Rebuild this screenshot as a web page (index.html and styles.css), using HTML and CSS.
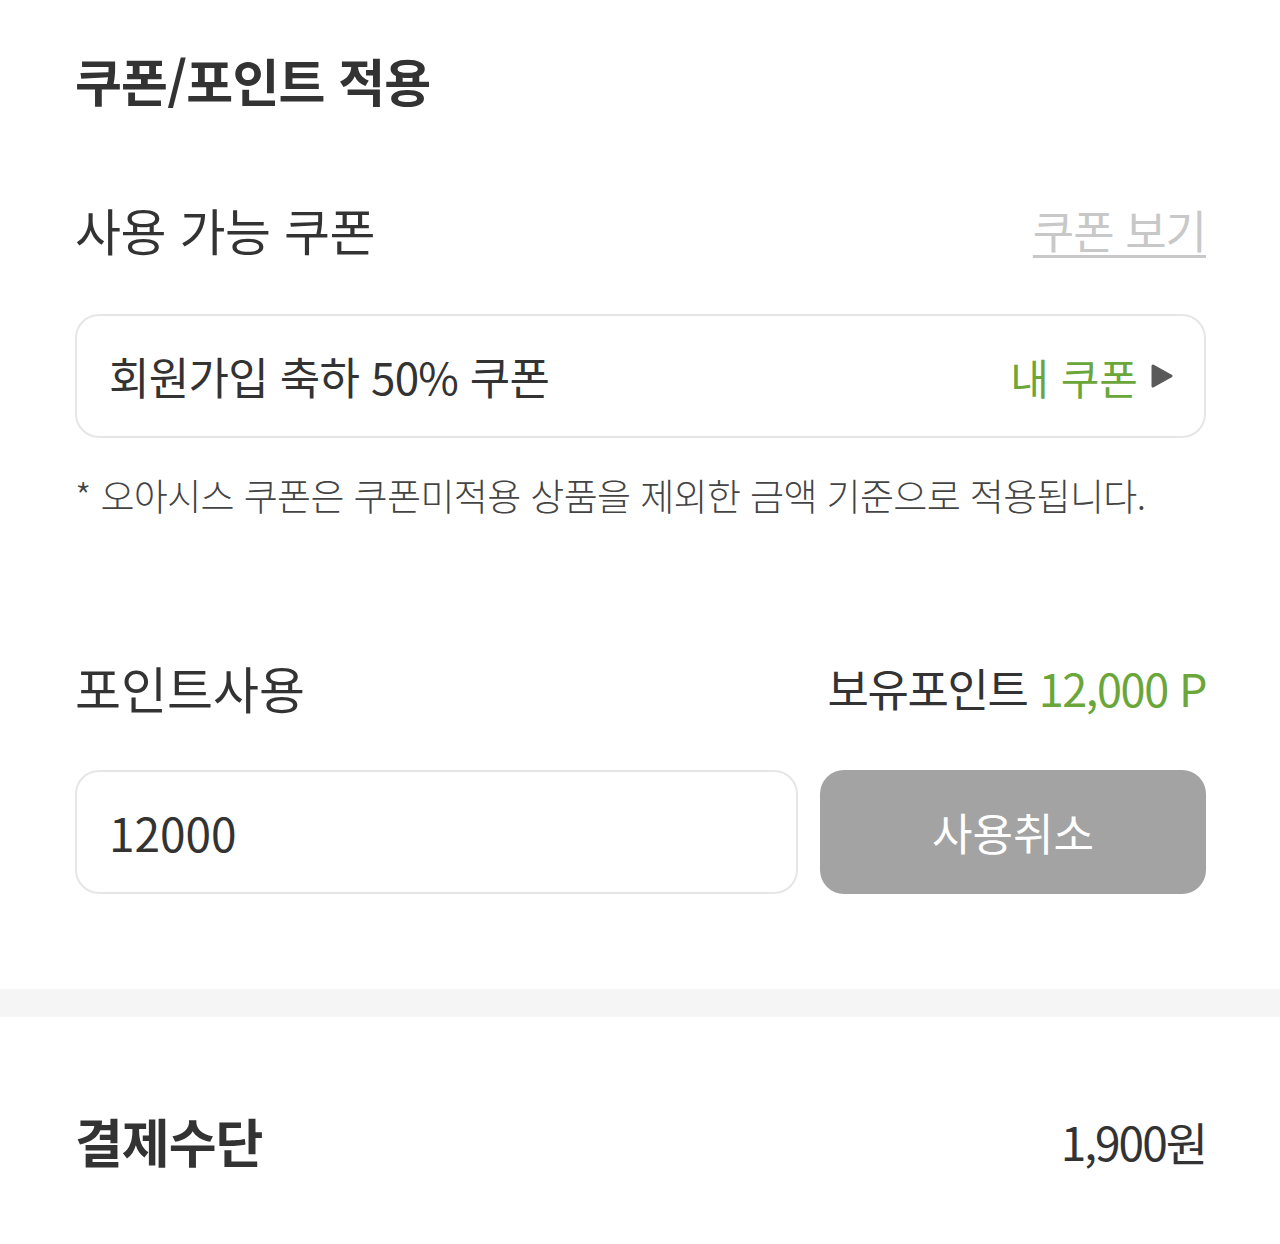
FILE: index.html
```html
<!DOCTYPE html>
<html lang="ko">

<head>
    <meta charset="UTF-8">
    <meta name="viewport" content="width=device-width, initial-scale=1.0">
    <title>쿠폰/포인트 적용</title>
    <link rel="stylesheet" href="styles.css">
</head>

<body>
    <div class="section">
        <h1 class="page-title">쿠폰/포인트 적용</h1>

        <div class="row-head coupon-head">
            <h2 class="sub-title">사용 가능 쿠폰</h2>
            <a class="link-view" href="#">쿠폰 보기</a>
        </div>

        <div class="coupon-box">
            <span class="coupon-name">회원가입 축하 50% 쿠폰</span>
            <span class="my-coupon">내 쿠폰
                <svg width="24" height="26" viewBox="0 0 24 26">
                    <path d="M3 3 L21 13 L3 23 Z" fill="#5a5a5a" stroke="#5a5a5a" stroke-width="3" stroke-linejoin="round" />
                </svg>
            </span>
        </div>
        <p class="notice">* 오아시스 쿠폰은 쿠폰미적용 상품을 제외한 금액 기준으로 적용됩니다.</p>

        <div class="row-head point-head">
            <h2 class="sub-title point-title">포인트사용</h2>
            <span class="have-point">보유포인트 <em>12,000 P</em></span>
        </div>

        <div class="point-row">
            <input class="point-input" type="text" value="12000">
            <button class="cancel-button">사용취소</button>
        </div>
    </div>

    <div class="divider"></div>

    <div class="section pay-section">
        <div class="row-head">
            <h2 class="pay-title">결제수단</h2>
            <span class="pay-amount">1,900원</span>
        </div>
    </div>
</body>

</html>
```

FILE: styles.css
```css
body {
    font-family: "Noto Sans CJK KR", "Noto Sans", sans-serif;
    margin: 0;
    padding: 0;
    background: #fff;
    color: #333;
}

.section {
    padding: 0 74px 0 75px;
}

.page-title {
    margin: 0;
    padding-top: 44px;
    font-size: 51px;
    font-weight: 700;
    letter-spacing: -0.8px;
    line-height: 72px;
    color: #333;
}

.row-head {
    display: flex;
    justify-content: space-between;
    align-items: center;
}

.coupon-head {
    margin-top: 78px;
}

.sub-title {
    margin: 0;
    font-size: 50px;
    font-weight: 400;
    letter-spacing: -0.5px;
    line-height: 70px;
    color: #333;
}

.point-title {
    letter-spacing: 0;
}

.link-view {
    font-size: 45px;
    color: #c8c8c8;
    text-decoration: underline;
    text-decoration-thickness: 3px;
    text-underline-offset: 6px;
    letter-spacing: -1px;
}

.coupon-box {
    margin-top: 50px;
    height: 124px;
    box-sizing: border-box;
    border: 2px solid #e6e6e6;
    border-radius: 24px;
    display: flex;
    justify-content: space-between;
    align-items: center;
    padding: 0 30px 0 32px;
}

.coupon-name {
    font-size: 44px;
    letter-spacing: -0.7px;
    color: #333;
}

.my-coupon {
    font-size: 42px;
    color: #6aa63a;
    display: flex;
    align-items: center;
    gap: 12px;
}

.notice {
    margin: 30px 0 0;
    font-size: 37px;
    font-weight: 300;
    letter-spacing: -0.65px;
    color: #444;
}

.point-head {
    margin-top: 130px;
}

.have-point {
    font-size: 45px;
    letter-spacing: -1.4px;
    color: #333;
}

.have-point em {
    font-style: normal;
    color: #6aa63a;
}

.point-row {
    display: flex;
    gap: 22px;
    margin-top: 48px;
}

.point-input {
    flex: 1;
    height: 124px;
    box-sizing: border-box;
    border: 2px solid #e6e6e6;
    border-radius: 24px;
    padding: 0 32px;
    font-family: inherit;
    font-size: 46px;
    color: #333;
    outline: none;
}

.cancel-button {
    width: 386px;
    height: 124px;
    background-color: #a3a3a3;
    color: white;
    border: none;
    border-radius: 24px;
    font-family: inherit;
    font-size: 44px;
    cursor: pointer;
}

.divider {
    margin-top: 95px;
    height: 28px;
    background: #f5f5f5;
}

.pay-section {
    padding-top: 86px;
}

.pay-title {
    margin: 0;
    font-size: 52px;
    font-weight: 700;
    letter-spacing: -1px;
    color: #333;
}

.pay-amount {
    font-size: 46px;
    letter-spacing: -2px;
    color: #333;
}
```
